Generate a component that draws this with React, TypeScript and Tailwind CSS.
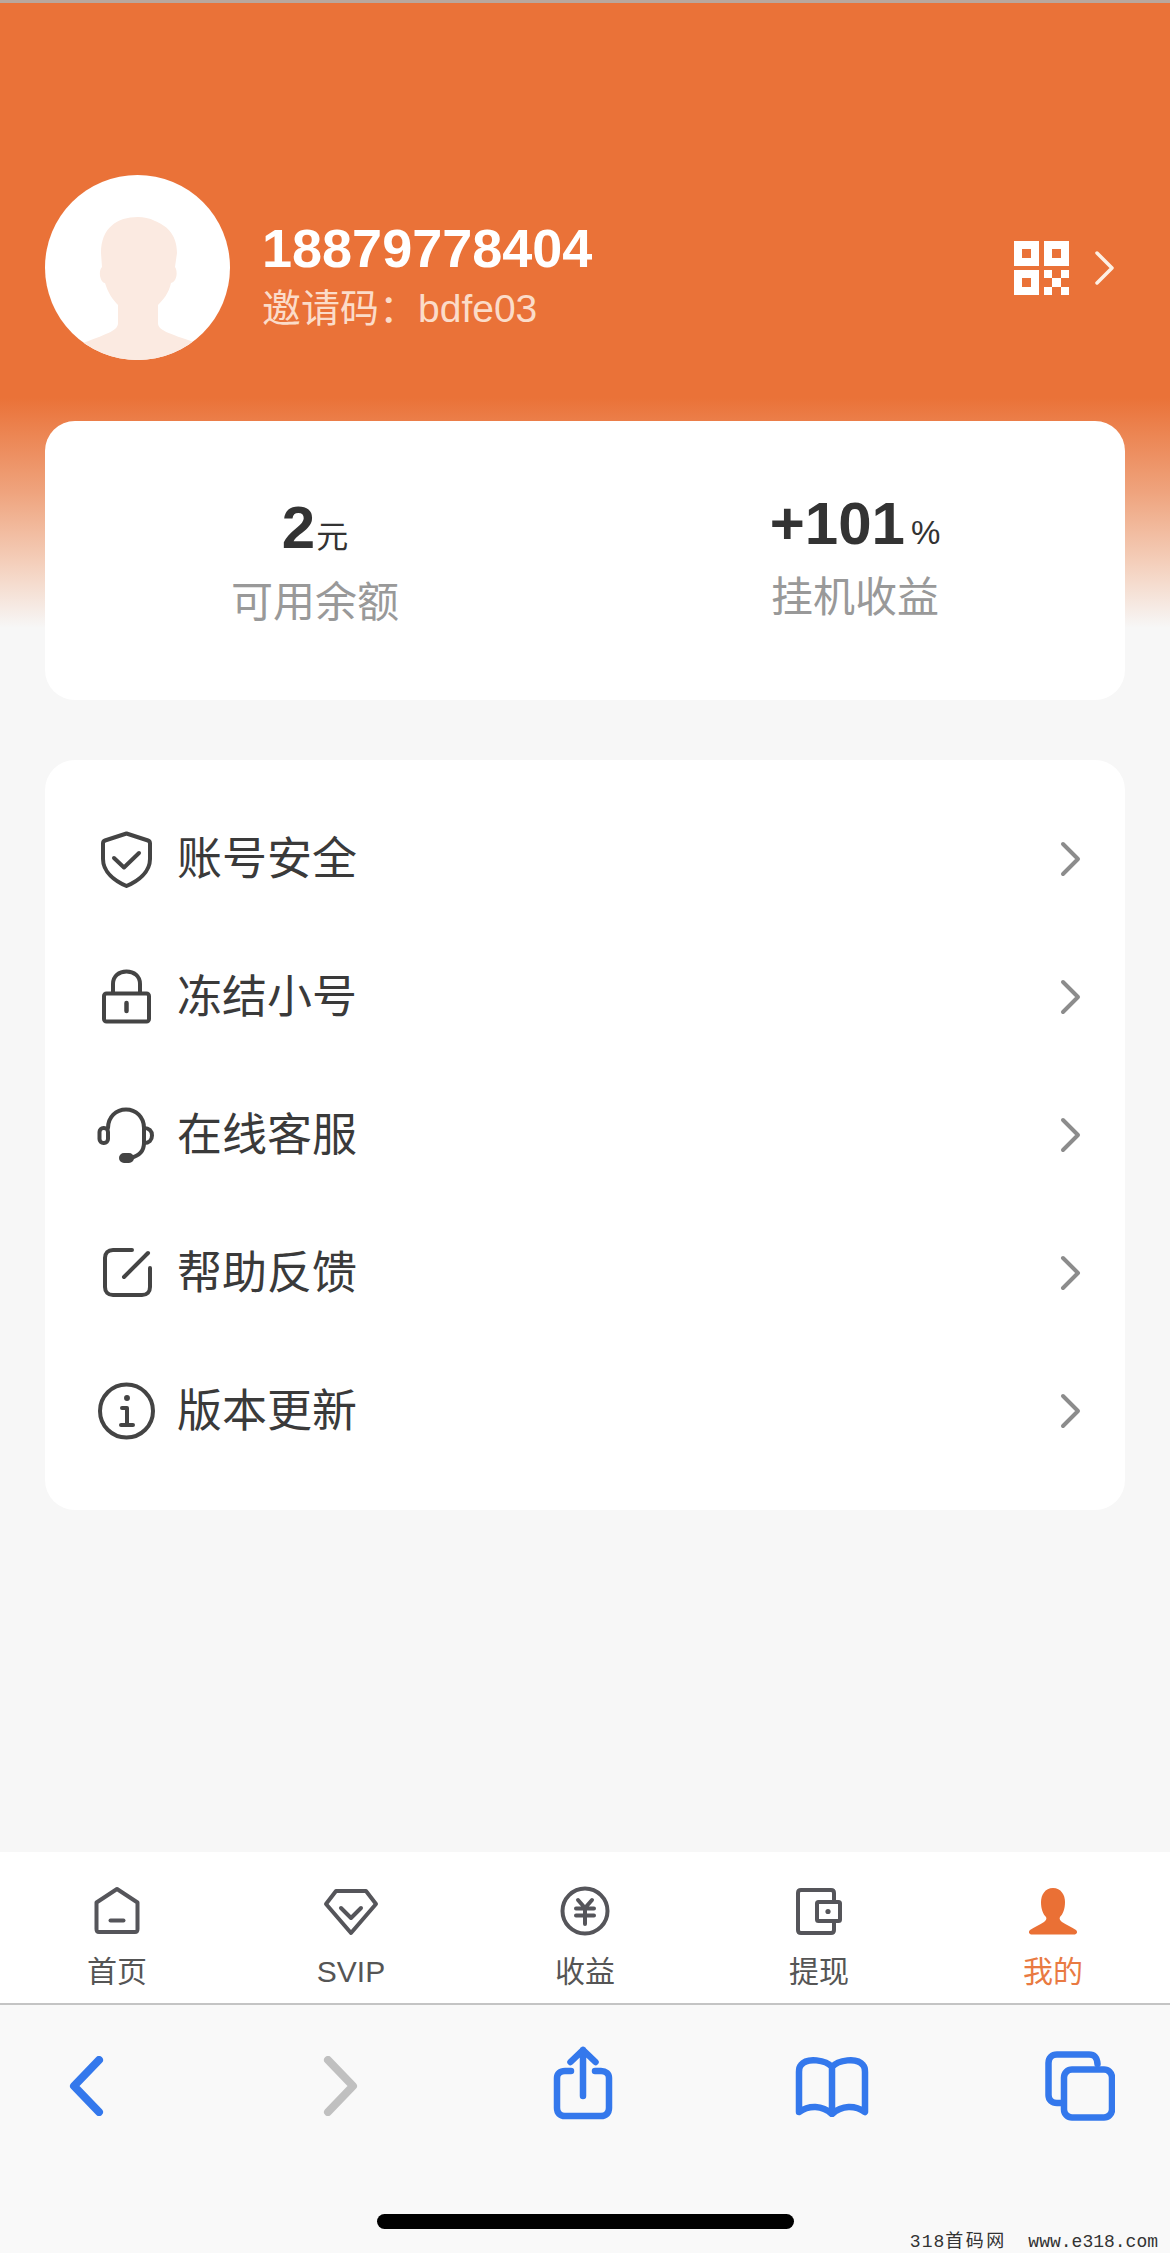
import type { ReactNode } from 'react';

const cjk = '"Liberation Sans", "Noto Sans CJK SC", sans-serif';

function Avatar() {
  return (
    <svg width="185" height="185" viewBox="0 0 185 185" className="shrink-0">
      <defs>
        <clipPath id="avatar-clip">
          <circle cx="92.5" cy="92.5" r="92.5" />
        </clipPath>
      </defs>
      <circle cx="92.5" cy="92.5" r="92.5" fill="#fff" />
      <path
        clipPath="url(#avatar-clip)"
        fill="#fbeae1"
        d="M93 42C72 42 56 53 56 78L57 92C53 96 55 107 60 108C63 118 68 125 73 130L73 148C73 155 65 158 38 168L38 190L152 190L152 168C122 158 113 155 113 148L113 130C118 125 124 118 126 108C132 107 133 96 130 92L132 78C132 58 120 50 110 46C104 43 99 42 93 42Z"
      />
    </svg>
  );
}

function QrIcon() {
  return (
    <svg width="55" height="54" viewBox="0 0 55 54" fill="#fff" shapeRendering="crispEdges">
      <path fillRule="evenodd" d="M0 0H25V25H0ZM8 8V17H17V8Z" />
      <path fillRule="evenodd" d="M30 0H55V25H30ZM38 8V17H47V8Z" />
      <path fillRule="evenodd" d="M0 29H25V54H0ZM8 37V46H17V37Z" />
      <path d="M30 29H38V37H30ZM47 29H55V37H47ZM38 37H47V46H38ZM30 46H38V54H30ZM47 46H55V54H47Z" />
    </svg>
  );
}

function Stroke({ w, h, children, width = 4, color = '#444' }: { w: number; h: number; children: ReactNode; width?: number; color?: string }) {
  return (
    <svg width={w} height={h} viewBox={`0 0 ${w} ${h}`} fill="none" stroke={color} strokeWidth={width} strokeLinecap="round" strokeLinejoin="round" className="shrink-0 overflow-visible">
      {children}
    </svg>
  );
}

const menu: { label: string; icon: ReactNode }[] = [
  {
    label: '账号安全',
    icon: (
      <Stroke w="56" h="56">
        <path d="M29.500 2.500L51 9.500C52.500 10 53 11 53 12.500V28C53 41 41 50 29.500 55C18 50 6 41 6 28V12.500C6 11 6.500 10 8 9.500Z" />
        <path d="M17 27L27 36.500L42 22" />
      </Stroke>
    ),
  },
  {
    label: '冻结小号',
    icon: (
      <Stroke w="56" h="56">
        <rect x="7" y="24.500" width="45" height="28" rx="2.500" />
        <path d="M16 24V15C16 7 22 2.500 29.500 2.500C37 2.500 43 7 43 15V24" />
        <path d="M29.500 34V42" strokeWidth="4.500" />
      </Stroke>
    ),
  },
  {
    label: '在线客服',
    icon: (
      <Stroke w="56" h="56">
        <path d="M11 21C11 10 19 2.500 29 2.500C39 2.500 47 10 47 21V36C47 44 42 49 33 51" />
        <rect x="2.500" y="21" width="8.500" height="15" rx="4" />
        <path d="M47 21C52 21 55 24 55 28.500C55 33 52 36 47 36" />
        <rect x="24" y="48" width="11" height="6" rx="3" fill="#444" />
      </Stroke>
    ),
  },
  {
    label: '帮助反馈',
    icon: (
      <Stroke w="56" h="56">
        <path d="M35 5H16C11 5 8 8 8 13V42C8 47 11 50 16 50H45C50 50 53 47 53 42V23" />
        <path d="M27 32L51 8" />
      </Stroke>
    ),
  },
  {
    label: '版本更新',
    icon: (
      <Stroke w="56" h="56">
        <circle cx="29.500" cy="28" r="26.500" />
        <circle cx="30" cy="15" r="2.200" fill="#444" strokeWidth="1.500" />
        <path d="M25 25H30V42M24 42H36" />
      </Stroke>
    ),
  },
];

const tabs: { label: string; icon: ReactNode; active?: boolean }[] = [
  {
    label: '首页',
    icon: (
      <Stroke w="46" h="48" color="#55555a">
        <path d="M23 2L43.500 15.500V42C43.500 44 43 45 41 45H5C3 45 2.500 44 2.500 42V15.500Z" />
        <path d="M16.500 33.500H29.500" />
      </Stroke>
    ),
  },
  {
    label: 'SVIP',
    icon: (
      <Stroke w="54" h="48" color="#55555a">
        <path d="M12 4H42L52 17L27 46L2 17Z" />
        <path d="M17 21L27 31L37 21" />
      </Stroke>
    ),
  },
  {
    label: '收益',
    icon: (
      <Stroke w="50" h="50" color="#55555a">
        <circle cx="25" cy="25" r="22.500" />
        <path d="M18 14L25 22L32 14M16 22.500H34M16 29.500H34M25 22V38" />
      </Stroke>
    ),
  },
  {
    label: '提现',
    icon: (
      <Stroke w="46" h="48" color="#55555a">
        <path d="M38 15V6C38 4 37 3 35 3H5C3 3 2 4 2 6V43C2 45 3 46 5 46H35C37 46 38 45 38 43V34" />
        <rect x="21" y="15" width="23" height="19" rx="1.500" />
        <circle cx="32" cy="24.500" r="2.600" fill="#55555a" stroke="none" />
      </Stroke>
    ),
  },
  {
    label: '我的',
    active: true,
    icon: (
      <svg width="50" height="48" viewBox="0 0 50 48" fill="#ea7035">
        <path d="M25 1C17 1 13 8 13 15C13 22 15 27 18 30C19 32 18 33 16 35C12 38 6 40 2 43C0 45 1 47.500 4 47.500H46C49 47.500 50 45 48 43C44 40 38 38 34 35C32 33 31 32 32 30C35 27 37 22 37 15C37 8 33 1 25 1Z" />
      </svg>
    ),
  },
];

function SafariIcon({ w, h, color = '#3478ec', stroke = 6.5, children }: { w: number; h: number; color?: string; stroke?: number; children: ReactNode }) {
  return (
    <svg width={w} height={h} viewBox={`0 0 ${w} ${h}`} fill="none" stroke={color} strokeWidth={stroke} strokeLinecap="round" strokeLinejoin="round">
      {children}
    </svg>
  );
}

export default function App() {
  return (
    <div
      className="flex h-[2253px] w-[1170px] flex-col border-t-[3px] border-[#b9a79d] bg-[linear-gradient(180deg,#ea7238_0px,#ea7238_395px,#efa47e_490px,#f4cfbb_560px,#f7f7f7_625px)]"
      style={{ fontFamily: cjk }}
    >
      <header className="flex items-center px-[45px] pt-[172px]">
        <Avatar />
        <div className="ml-[32px] flex flex-1 flex-col pt-[14px]">
          <span className="text-[54px] leading-[60px] font-bold text-white">18879778404</span>
          <span className="mt-[8px] text-[39px] leading-[46px] text-[#fbdcc9]">邀请码：bdfe03</span>
        </div>
        <QrIcon />
        <svg width="22" height="34" viewBox="0 0 22 34" fill="none" stroke="#fdf0e4" strokeWidth="3.500" strokeLinecap="round" strokeLinejoin="round" className="mr-[9px] ml-[25px]">
          <path d="M3 2L18 17L3 32" />
        </svg>
      </header>

      <section className="mx-[45px] mt-[61px] flex h-[279px] rounded-[30px] bg-white">
        <div className="flex flex-1 flex-col items-center pt-[79px]">
          <div className="flex h-[56px] items-baseline">
            <span className="text-[60px] leading-[56px] font-bold text-[#333]">2</span>
            <span className="ml-[1px] text-[32px] leading-[56px] text-[#333]">元</span>
          </div>
          <span className="mt-[22px] text-[42px] leading-[50px] text-[#999]">可用余额</span>
        </div>
        <div className="flex flex-1 flex-col items-center pt-[75px]">
          <div className="flex h-[56px] items-baseline">
            <span className="text-[60px] leading-[56px] font-bold text-[#333]">+101</span>
            <span className="ml-[6px] text-[33px] leading-[56px] text-[#333]">%</span>
          </div>
          <span className="mt-[21px] text-[42px] leading-[50px] text-[#999]">挂机收益</span>
        </div>
      </section>

      <section className="mx-[45px] mt-[60px] flex flex-col rounded-[30px] bg-white py-[30px]">
        {menu.map((item) => (
          <div key={item.label} className="flex h-[138px] items-center pr-[42px] pl-[52px]">
            {item.icon}
            <span className="ml-[24px] flex-1 text-[45px] leading-none text-[#3a3a3a]">{item.label}</span>
            <svg width="24" height="36" viewBox="0 0 24 36" fill="none" stroke="#8c8c8c" strokeWidth="4" strokeLinecap="round" strokeLinejoin="round">
              <path d="M4 3L19 18L4 33" />
            </svg>
          </div>
        ))}
      </section>

      <nav className="mt-auto flex h-[153px] border-b-[2px] border-[#c4c4c4] bg-white">
        {tabs.map((tab) => (
          <div key={tab.label} className="flex flex-1 flex-col items-center pt-[34px]">
            <div className="flex h-[50px] items-center">{tab.icon}</div>
            <span className={`mt-[18px] text-[30px] leading-[36px] ${tab.active ? 'text-[#e97a42]' : 'text-[#555]'}`}>{tab.label}</span>
          </div>
        ))}
      </nav>

      <footer className="relative h-[248px] bg-[#f9f9f9]">
        <div className="flex items-center justify-between pt-[46px] pr-[53px] pl-[49px]">
          <div className="flex w-[74px] justify-center">
            <SafariIcon w={36} h={60} stroke={8}>
              <path d="M31 4L6 30L31 56" />
            </SafariIcon>
          </div>
          <div className="flex w-[74px] justify-center pl-[13px]">
            <SafariIcon w={36} h={60} color="#c0c0c0" stroke={8}>
              <path d="M5 4L30 30L5 56" />
            </SafariIcon>
          </div>
          <div className="-mt-[6px] flex w-[74px] justify-center">
            <SafariIcon w={60} h={74}>
              <path d="M18 25H12C7 25 4 28 4 32V62C4 67 7 70 12 70H48C53 70 56 67 56 62V32C56 28 53 25 48 25H42" />
              <path d="M30 50V4M17.500 16L30 4L42.500 16" />
            </SafariIcon>
          </div>
          <div className="flex w-[74px] justify-center">
            <SafariIcon w={74} h={62}>
              <path d="M37 12C31 5 12 2 6 10C4 12 4 14 4 17V57C14 50 27 50 37 59C47 50 60 50 70 57V17C70 14 70 12 68 10C62 2 43 5 37 12ZM37 12V59" />
            </SafariIcon>
          </div>
          <div className="flex w-[74px] justify-center">
            <SafariIcon w={70} h={70}>
              <path d="M16 52H12C7 52 3.500 49 3.500 44V12C3.500 7 7 3.500 12 3.500H44C49 3.500 52 6 52.500 13" />
              <rect x="19" y="18.500" width="48" height="48" rx="8" />
            </SafariIcon>
          </div>
        </div>
        <div className="absolute bottom-[24px] left-[377px] h-[15px] w-[417px] rounded-full bg-black" />
        <span
          className="absolute right-[12px] bottom-[2px] whitespace-pre text-[18px] leading-[18px] text-[#333]"
          style={{ fontFamily: '"Liberation Mono", "Noto Sans CJK SC", monospace' }}
        >
          <span className="tracking-[1px]">318</span>
          <span className="tracking-[2.5px]">首码网</span>  www.e318.com
        </span>
      </footer>
    </div>
  );
}
